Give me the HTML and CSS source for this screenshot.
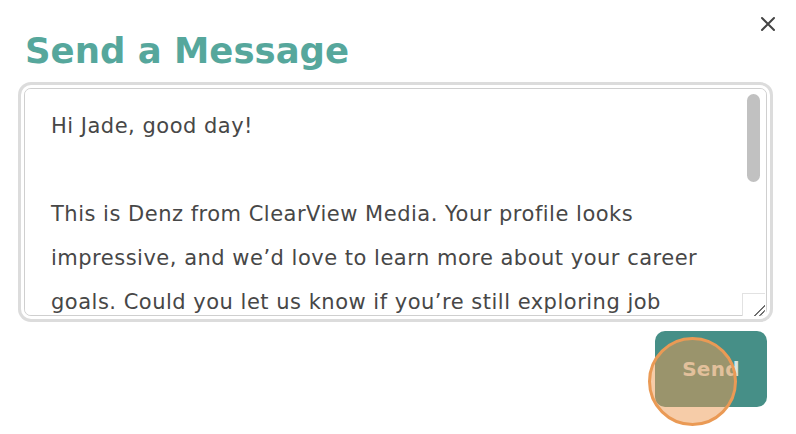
FILE: index.html
```html
<!DOCTYPE html>
<html lang="en">
<head>
<meta charset="utf-8">
<title>Send a Message</title>
<link rel="stylesheet" href="styles.css">
</head>
<body>
<div class="modal">
  <button class="close" aria-label="Close">
    <svg width="16" height="16" viewBox="0 0 16 16"><path d="M2 2 L14 14 M14 2 L2 14" stroke="#444" stroke-width="2" stroke-linecap="round" fill="none"/></svg>
  </button>
  <h1 class="title">Send a Message</h1>
  <div class="field">
    <textarea class="message">Hi Jade, good day!

This is Denz from ClearView Media. Your profile looks
impressive, and we’d love to learn more about your career
goals. Could you let us know if you’re still exploring job
opportunities at the moment? We currently have a few
openings on our creative team that could be a great fit
for your experience.

If you’re interested, we’d be happy to set up a short call
this week to chat about the roles.

Looking forward to hearing from you!

Best regards,
Denz</textarea>
    <span class="scroll-thumb"></span>
    <span class="resize-grip"></span>
  </div>
  <div class="actions">
    <button class="send">Send</button>
  </div>
  <div class="click-indicator"></div>
</div>
</body>
</html>
```

FILE: styles.css
```css
html, body {
  margin: 0;
  padding: 0;
  background: #fff;
}

body {
  font-family: "DejaVu Sans", "Open Sans", sans-serif;
  width: 796px;
  height: 434px;
  overflow: hidden;
}

.modal {
  position: relative;
  padding: 25px 29px 0 24px;
}

.close {
  position: absolute;
  top: 16px;
  right: 20px;
  width: 16px;
  height: 16px;
  padding: 0;
  border: 0;
  background: none;
  display: flex;
  cursor: pointer;
}

.title {
  margin: 0 0 0 1px;
  font-size: 35.5px;
  line-height: 52px;
  font-weight: 700;
  color: #56a79c;
}

.field {
  position: relative;
  margin-top: 11px;
  display: flex;
}

.message {
  box-sizing: border-box;
  width: 743px;
  height: 228px;
  margin: 0;
  padding: 15px 20px 0 26px;
  border: 1px solid #cfcfcf;
  border-radius: 7px;
  box-shadow: 0 0 0 3px #fff, 0 0 0 6px #dcdcdc;
  outline: none;
  font-family: "DejaVu Sans", "Open Sans", sans-serif;
  font-size: 21px;
  letter-spacing: 0.5px;
  line-height: 44px;
  color: #474747;
  resize: both;
  overflow-y: scroll;
  white-space: pre-wrap;
}

.message::-webkit-scrollbar {
  width: 21px;
  height: 23px;
}

.message::-webkit-scrollbar-track {
  background: transparent;
}

.message::-webkit-scrollbar-thumb {
  background: transparent;
}

.message::-webkit-scrollbar-corner {
  background: #fff;
}

.message::-webkit-resizer {
  background: #fff;
}

.scroll-thumb {
  position: absolute;
  left: 723px;
  top: 6px;
  width: 13px;
  height: 88px;
  border-radius: 7px;
  background: #c1c1c1;
  pointer-events: none;
}

.resize-grip {
  position: absolute;
  left: 718px;
  top: 205px;
  width: 22px;
  height: 22px;
  border-left: 1px solid #e2e2e2;
  border-top: 1px solid #e2e2e2;
  background:
    linear-gradient(315deg, transparent 0 3px, #6f6f6f 3px 4.3px, transparent 4.3px 7px, #6f6f6f 7px 8.3px, transparent 8.3px),
    #fff;
  border-bottom-right-radius: 6px;
  pointer-events: none;
}

.actions {
  display: flex;
  justify-content: flex-end;
  margin-top: 15px;
}

.send {
  width: 112px;
  height: 76px;
  border: 0;
  border-radius: 10px;
  background: #468f87;
  color: rgba(255, 255, 255, 0.8);
  font-family: "DejaVu Sans", "Open Sans", sans-serif;
  font-weight: 700;
  font-size: 20px;
  letter-spacing: 0.3px;
  cursor: pointer;
}

.click-indicator {
  position: absolute;
  left: 648px;
  top: 337px;
  width: 83px;
  height: 83px;
  border: 3px solid #ea9a55;
  border-radius: 50%;
  background: rgba(237, 154, 82, 0.5);
  pointer-events: none;
}
```
